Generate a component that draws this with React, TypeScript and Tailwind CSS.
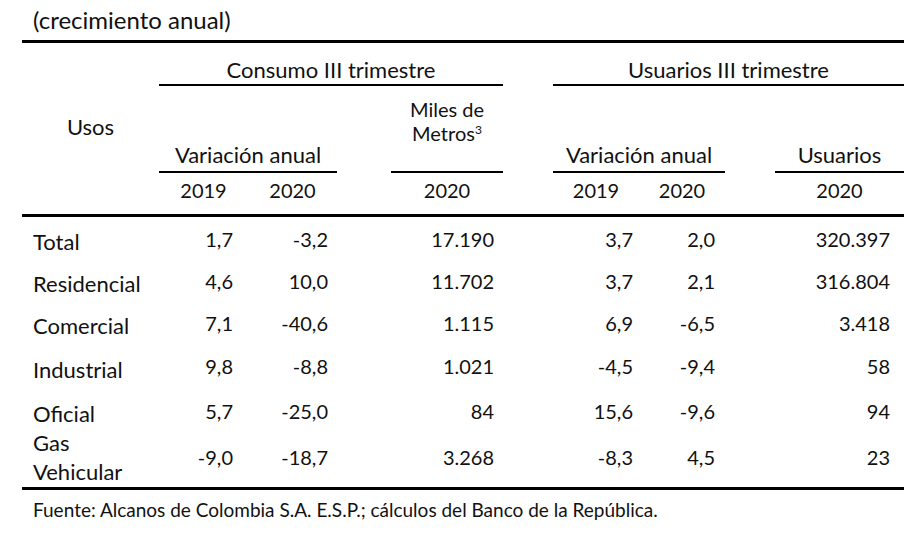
const cols =
  'grid grid-cols-[137px_89px_89px_54px_112px_50px_86px_86px_50px_129px]';

const rows = [
  { label: 'Total', h: 'h-[43px]', v: ['1,7', '-3,2', '17.190', '3,7', '2,0', '320.397'] },
  { label: 'Residencial', h: 'h-[41px]', v: ['4,6', '10,0', '11.702', '3,7', '2,1', '316.804'] },
  { label: 'Comercial', h: 'h-[43px]', v: ['7,1', '-40,6', '1.115', '6,9', '-6,5', '3.418'] },
  { label: 'Industrial', h: 'h-[44px]', v: ['9,8', '-8,8', '1.021', '-4,5', '-9,4', '58'] },
  { label: 'Oficial', h: 'h-[45px]', v: ['5,7', '-25,0', '84', '15,6', '-9,6', '94'] },
];

function Values({ v }: { v: string[] }) {
  return (
    <>
      <div className="text-right pr-[15px]">{v[0]}</div>
      <div className="text-right pr-[9px]">{v[1]}</div>
      <div />
      <div className="text-right pr-[9px]">{v[2]}</div>
      <div />
      <div className="text-right pr-[6px]">{v[3]}</div>
      <div className="text-right pr-[10px]">{v[4]}</div>
      <div />
      <div className="text-right pr-[14px]">{v[5]}</div>
    </>
  );
}

export default function App() {
  return (
    <div
      className="w-[924px] h-[541px] bg-white text-[#111] text-[20px]"
      style={{ fontFamily: 'Lato, "Open Sans", sans-serif' }}
    >
      <div className="ml-[22px] w-[882px]">
        {/* Title */}
        <div className="h-[40px] pt-[6px] pl-[11px] text-[24px] leading-7">(crecimiento anual)</div>

        {/* Header */}
        <div className={`${cols} grid-rows-[43px_87px_41px] border-y-[3px] border-black leading-6`}>
          <div className="col-start-1 row-start-1 row-span-3 pt-[72px] text-center text-[22px]">Usos</div>

          <div className="col-start-2 col-span-4 row-start-1 flex items-end justify-center pb-[2px] border-b-2 border-black text-[22px]">
            Consumo III trimestre
          </div>
          <div className="col-start-7 col-span-4 row-start-1 flex items-end justify-center pb-[2px] border-b-2 border-black text-[22px]">
            Usuarios III trimestre
          </div>

          <div className="col-start-2 col-span-2 row-start-2 flex items-end justify-center pb-[4px] border-b-2 border-black text-[22px]">
            Variación anual
          </div>
          <div className="col-start-5 row-start-2 flex flex-col items-center justify-end pb-[26px] text-[20px] leading-[24px] border-b-2 border-black">
            <span>Miles de</span>
            <span>
              Metros<span className="text-[12px] leading-none align-[7px]">3</span>
            </span>
          </div>
          <div className="col-start-7 col-span-2 row-start-2 flex items-end justify-center pb-[4px] border-b-2 border-black text-[22px]">
            Variación anual
          </div>
          <div className="col-start-10 row-start-2 flex items-end justify-center pb-[4px] border-b-2 border-black text-[22px]">
            Usuarios
          </div>

          <div className="col-start-2 row-start-3 pt-[5px] text-center">2019</div>
          <div className="col-start-3 row-start-3 pt-[5px] text-center">2020</div>
          <div className="col-start-5 row-start-3 pt-[5px] text-center">2020</div>
          <div className="col-start-7 row-start-3 pt-[5px] text-center">2019</div>
          <div className="col-start-8 row-start-3 pt-[5px] text-center">2020</div>
          <div className="col-start-10 row-start-3 pt-[5px] text-center">2020</div>
        </div>

        {/* Body */}
        <div className="border-b-[3px] border-black leading-6">
          {rows.map((r) => (
            <div key={r.label} className={`${cols} items-center ${r.h}`}>
              <div className="pl-[11px] pt-[7px] text-[22px]">{r.label}</div>
              <Values v={r.v} />
            </div>
          ))}
          <div className={`${cols} grid-rows-[48px] items-center h-[54px]`}>
            <div className="pl-[11px] text-[22px] leading-[29px]">
              Gas
              <br />
              Vehicular
            </div>
            <Values v={['-9,0', '-18,7', '3.268', '-8,3', '4,5', '23']} />
          </div>
        </div>

        {/* Source */}
        <div className="pt-[8px] pl-[11px] text-[19px] leading-6">
          Fuente: Alcanos de Colombia S.A. E.S.P.; cálculos del Banco de la República.
        </div>
      </div>
    </div>
  );
}
